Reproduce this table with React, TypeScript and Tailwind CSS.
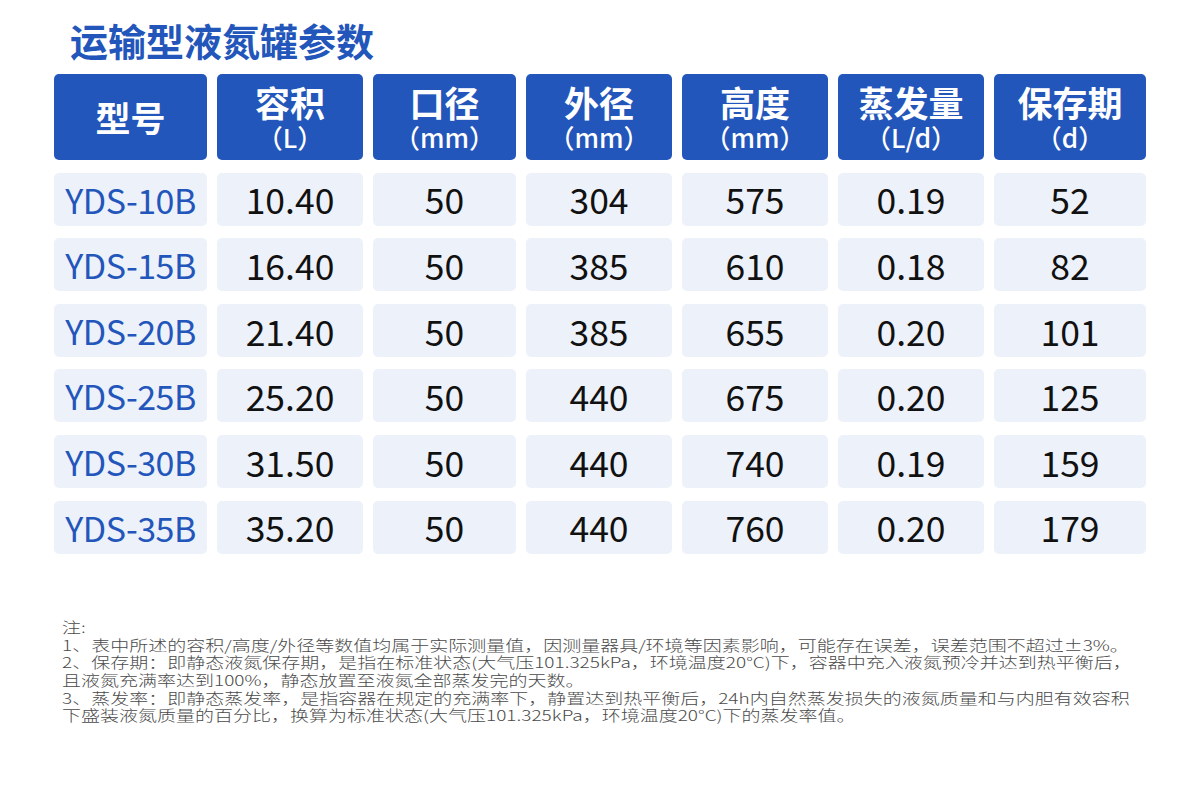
const headers: { title: string; unit?: string }[] = [
  { title: "型号" },
  { title: "容积", unit: "（L）" },
  { title: "口径", unit: "（mm）" },
  { title: "外径", unit: "（mm）" },
  { title: "高度", unit: "（mm）" },
  { title: "蒸发量", unit: "（L/d）" },
  { title: "保存期", unit: "（d）" },
];

const rows = [
  ["YDS-10B", "10.40", "50", "304", "575", "0.19", "52"],
  ["YDS-15B", "16.40", "50", "385", "610", "0.18", "82"],
  ["YDS-20B", "21.40", "50", "385", "655", "0.20", "101"],
  ["YDS-25B", "25.20", "50", "440", "675", "0.20", "125"],
  ["YDS-30B", "31.50", "50", "440", "740", "0.19", "159"],
  ["YDS-35B", "35.20", "50", "440", "760", "0.20", "179"],
];

const notes = [
  "注:",
  "1、表中所述的容积/高度/外径等数值均属于实际测量值，因测量器具/环境等因素影响，可能存在误差，误差范围不超过±3%。",
  "2、保存期：即静态液氮保存期，是指在标准状态(大气压101.325kPa，环境温度20°C)下，容器中充入液氮预冷并达到热平衡后，",
  "且液氮充满率达到100%，静态放置至液氮全部蒸发完的天数。",
  "3、蒸发率：即静态蒸发率，是指容器在规定的充满率下，静置达到热平衡后，24h内自然蒸发损失的液氮质量和与内胆有效容积",
  "下盛装液氮质量的百分比，换算为标准状态(大气压101.325kPa，环境温度20°C)下的蒸发率值。",
];

const font = "font-['Noto_Sans_CJK_SC','Noto_Sans',sans-serif]";

export default function App() {
  return (
    <div className={`w-[1200px] h-[800px] bg-white ${font} overflow-hidden`}>
      <h1 className="pl-[70px] pt-[15px] text-[38px] leading-[50px] font-bold text-[#2356ba]">
        运输型液氮罐参数
      </h1>

      <div className="ml-[54px] mt-[9px] grid grid-cols-[153px_146px_143px_146px_146px_146px_152px] gap-x-[10px] gap-y-[12.6px]">
        {headers.map((h) => (
          <div
            key={h.title}
            className="h-[86px] rounded-[5px] bg-[#2356ba] text-white flex flex-col items-center justify-center"
          >
            <div className="text-[35px] leading-[40px] font-bold">{h.title}</div>
            {h.unit && (
              <div className="text-[26px] leading-[30px] font-medium">{h.unit}</div>
            )}
          </div>
        ))}

        {rows.map((r) =>
          r.map((v, i) => (
            <div
              key={r[0] + i}
              className={`h-[53px] rounded-[5px] bg-[#edf1fa] flex items-center justify-center ${
                i === 0 ? "text-[34px] text-[#2356ba] tracking-[-0.5px]" : "text-[35.5px] text-[#111]"
              }`}
            >
              {v}
            </div>
          ))
        )}
      </div>

      <div className="pl-[62px] mt-[64px] origin-top-left scale-y-[0.765] text-[19px] leading-[23px] font-light text-[#4a4a4a]">
        {notes.map((n) => (
          <div key={n} className="whitespace-nowrap">{n}</div>
        ))}
      </div>
    </div>
  );
}
